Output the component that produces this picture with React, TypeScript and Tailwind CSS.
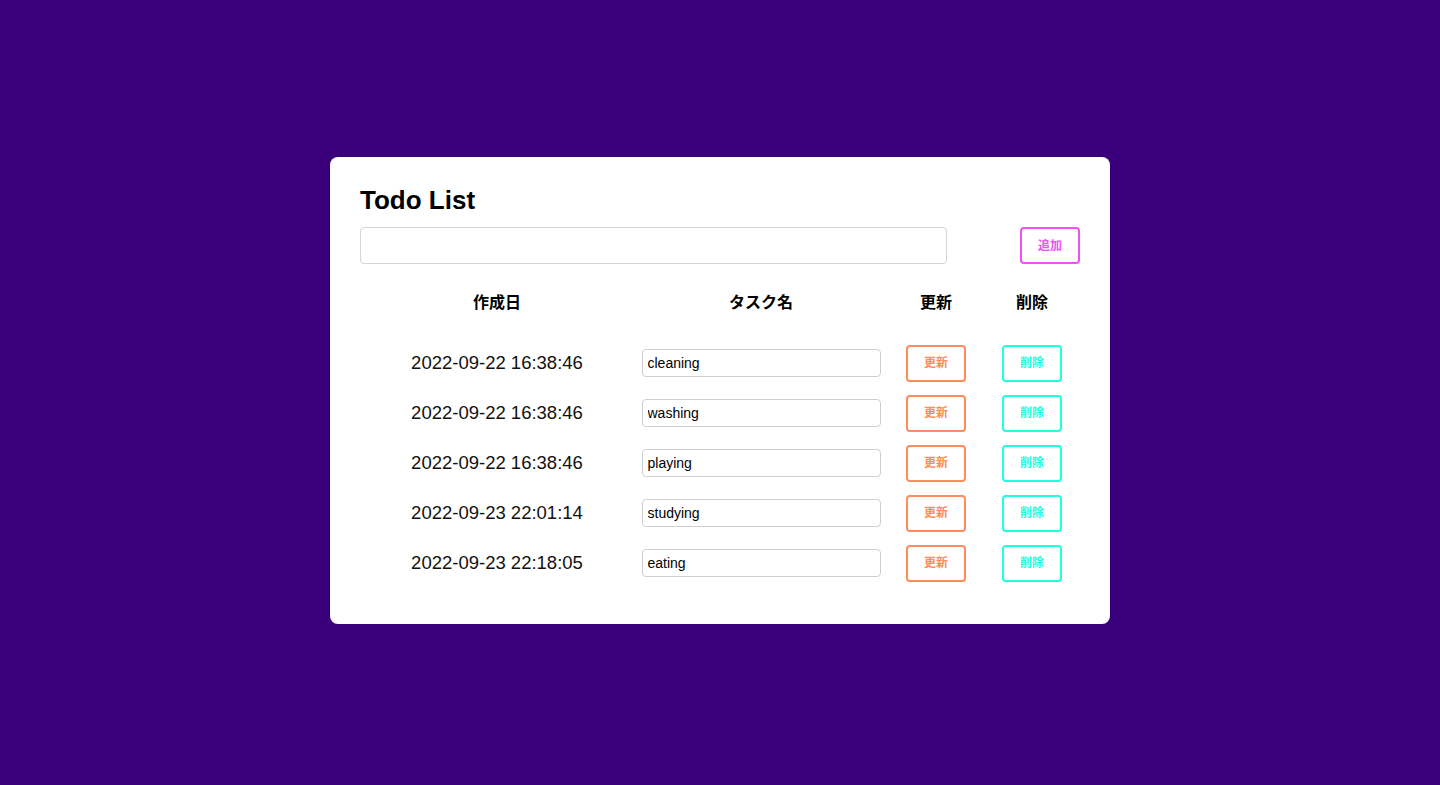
import { useState } from 'react';

interface Todo {
  id: number;
  createdAt: string;
  name: string;
}

const initialTodos: Todo[] = [
  { id: 1, createdAt: '2022-09-22 16:38:46', name: 'cleaning' },
  { id: 2, createdAt: '2022-09-22 16:38:46', name: 'washing' },
  { id: 3, createdAt: '2022-09-22 16:38:46', name: 'playing' },
  { id: 4, createdAt: '2022-09-23 22:01:14', name: 'studying' },
  { id: 5, createdAt: '2022-09-23 22:18:05', name: 'eating' },
];

const font = "font-['Liberation_Sans','Noto_Sans_CJK_JP',sans-serif]";

export default function App() {
  const [todos, setTodos] = useState<Todo[]>(initialTodos);
  const [newName, setNewName] = useState('');

  const updateName = (id: number, name: string) => {
    setTodos((prev) => prev.map((t) => (t.id === id ? { ...t, name } : t)));
  };

  const removeTodo = (id: number) => {
    setTodos((prev) => prev.filter((t) => t.id !== id));
  };

  const addTodo = () => {
    if (!newName.trim()) return;
    setTodos((prev) => [
      ...prev,
      { id: Date.now(), createdAt: '2022-09-23 22:18:05', name: newName },
    ]);
    setNewName('');
  };

  return (
    <div className={`min-h-screen bg-[#3a007b] flex items-center justify-center pb-[4px] ${font}`}>
      <div className="w-[780px] bg-white rounded-[8px] px-[30px] pt-[30px] pb-[36px]">
        <h1 className="text-[26px] leading-[27px] font-bold text-black">Todo List</h1>

        <div className="mt-[13px] flex items-center justify-between">
          <input
            value={newName}
            onChange={(e) => setNewName(e.target.value)}
            className="w-[587px] h-[37px] border border-[#d4d4d4] rounded-[4px] px-[8px] text-[14px] outline-none"
          />
          <button
            onClick={addTodo}
            className="w-[60px] h-[37px] border-2 border-[#f050f8] rounded-[4px] text-[12px] font-bold text-[#f050f8] bg-white"
          >
            追加
          </button>
        </div>

        <div className="mt-[27px] grid grid-cols-[274px_254px_96px_96px] h-[24px] items-center text-center text-[16px] font-bold text-black">
          <div>作成日</div>
          <div>タスク名</div>
          <div>更新</div>
          <div>削除</div>
        </div>

        <div className="mt-[23px]">
          {todos.map((todo) => (
            <div
              key={todo.id}
              className="grid grid-cols-[274px_254px_96px_96px] h-[50px] items-center"
            >
              <div className="text-center text-[18.5px] text-[#111]">{todo.createdAt}</div>
              <div className="flex justify-center">
                <input
                  value={todo.name}
                  onChange={(e) => updateName(todo.id, e.target.value)}
                  className="w-[239px] h-[28px] border border-[#cfcfcf] rounded-[4px] pl-[5px] text-[14px] text-black outline-none"
                />
              </div>
              <div className="flex justify-center">
                <button className="w-[60px] h-[37px] border-2 border-[#ff8c5c] rounded-[4px] text-[12px] font-bold text-[#ff8c5c] bg-white">
                  更新
                </button>
              </div>
              <div className="flex justify-center">
                <button
                  onClick={() => removeTodo(todo.id)}
                  className="w-[60px] h-[37px] border-2 border-[#1effe0] rounded-[4px] text-[12px] font-bold text-[#1effe0] bg-white"
                >
                  削除
                </button>
              </div>
            </div>
          ))}
        </div>
      </div>
    </div>
  );
}
